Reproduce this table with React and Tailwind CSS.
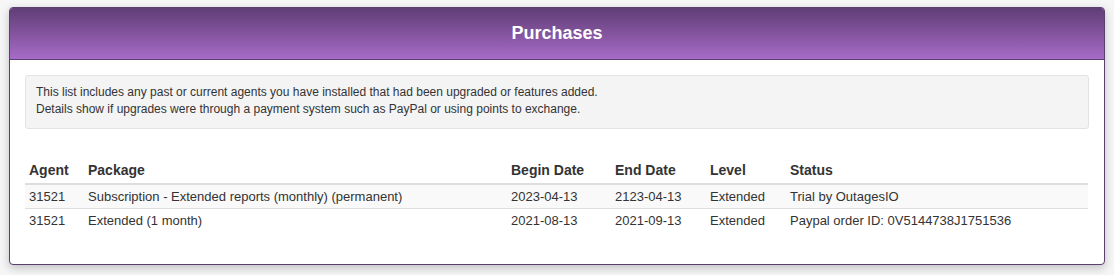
const ROWS = [
  {
    agent: "31521",
    pkg: "Subscription - Extended reports (monthly) (permanent)",
    begin: "2023-04-13",
    end: "2123-04-13",
    level: "Extended",
    status: "Trial by OutagesIO",
  },
  {
    agent: "31521",
    pkg: "Extended (1 month)",
    begin: "2021-08-13",
    end: "2021-09-13",
    level: "Extended",
    status: "Paypal order ID: 0V5144738J1751536",
  },
];

export default function App() {
  return (
    <div
      className="min-h-[275px] bg-[#f6f6f6] pt-[7px] px-[9px] pb-[9px]"
      style={{ fontFamily: '"Liberation Sans", Arial, sans-serif' }}
    >
      <div className="w-[1096px] rounded-[4px] border border-[#5b3f6e] bg-white shadow-[0_3px_10px_rgba(0,0,0,0.22)] overflow-hidden">
        <div className="h-[52px] border-b border-[#5b3f6e] bg-gradient-to-b from-[#603e76] to-[#a86bc8] flex items-center justify-center">
          <h1 className="text-[18px] font-bold text-white">Purchases</h1>
        </div>

        <div className="px-[15px] pt-[15px] pb-[32px]">
          <div className="h-[54px] rounded-[3px] border border-[#e3e3e3] bg-[#f4f4f4] px-[10px] pt-[8px] text-[12px] leading-[17px] text-[#333]">
            <p>
              This list includes any past or current agents you have installed
              that had been upgraded or features added.
            </p>
            <p>
              Details show if upgrades were through a payment system such as
              PayPal or using points to exchange.
            </p>
          </div>

          <table className="mt-[28px] w-[1063px] border-collapse text-left text-[#333]">
            <thead>
              <tr className="h-[27px] border-b-2 border-[#ddd] text-[14px] font-bold">
                <th className="w-[59px] px-[4px] align-middle">Agent</th>
                <th className="w-[423px] px-[4px] align-middle">Package</th>
                <th className="w-[104px] px-[4px] align-middle">Begin Date</th>
                <th className="w-[95px] px-[4px] align-middle">End Date</th>
                <th className="w-[80px] px-[4px] align-middle">Level</th>
                <th className="px-[4px] align-middle">Status</th>
              </tr>
            </thead>
            <tbody className="text-[13px]">
              {ROWS.map((r, i) => (
                <tr
                  key={i}
                  className={
                    "h-[24px] " +
                    (i === 0 ? "bg-[#f9f9f9] border-b border-[#ddd]" : "")
                  }
                >
                  <td className="px-[4px]">{r.agent}</td>
                  <td className="px-[4px]">{r.pkg}</td>
                  <td className="px-[4px]">{r.begin}</td>
                  <td className="px-[4px]">{r.end}</td>
                  <td className="px-[4px]">{r.level}</td>
                  <td className="px-[4px]">{r.status}</td>
                </tr>
              ))}
            </tbody>
          </table>
        </div>
      </div>
    </div>
  );
}
